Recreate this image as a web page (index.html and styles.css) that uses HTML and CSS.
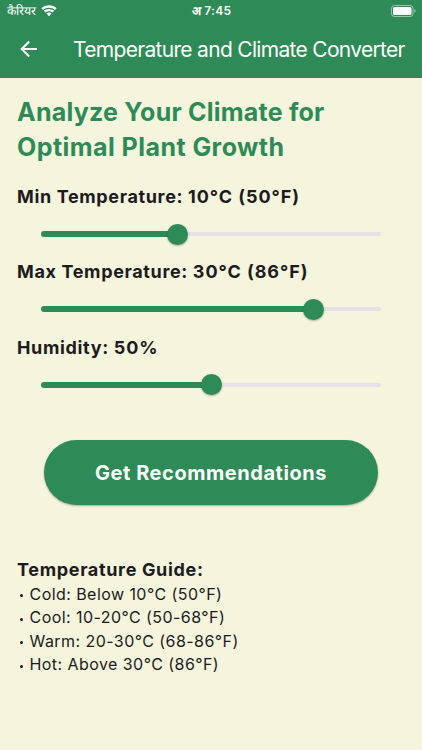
FILE: index.html
```html
<!DOCTYPE html>
<html lang="hi">
<head>
<meta charset="utf-8">
<title>Temperature and Climate Converter</title>
<link rel="stylesheet" href="styles.css">
</head>
<body>
<header class="top">
  <div class="status">
    <div class="carrier"><span>कैरियर</span>
      <svg class="wifi" viewBox="0 0 16 12" width="16" height="12"><path fill="#fff" d="M8 .2C5 .2 2.300 1.300.3 3.200L2.100 5C3.600 3.600 5.700 2.700 8 2.700s4.400.9 5.900 2.300l1.800-1.800C13.700 1.300 11 .2 8 .2Z"/><path fill="#fff" d="M8 3.900C6 3.900 4.200 4.600 2.800 5.800l1.800 1.800C5.500 6.800 6.600 6.300 8 6.300s2.500.5 3.400 1.300l1.800-1.800C11.800 4.600 10 3.900 8 3.900Z"/><path fill="#fff" d="M8 7.500c-1 0-1.900.4-2.600 1L8 11.300l2.600-2.800C9.900 7.900 9 7.500 8 7.500Z"/></svg>
    </div>
    <div class="time">अ 7:45</div>
    <svg class="battery" viewBox="0 0 25 12" width="25" height="12"><rect x=".5" y=".5" width="21.500" height="11" rx="3" fill="none" stroke="#fff" stroke-opacity=".5"/><rect x="2" y="2" width="18.500" height="8" rx="1.500" fill="#fff"/><path d="M23.300 4.200c1 .4 1.400 1 1.400 1.800s-.4 1.400-1.400 1.800Z" fill="#fff" fill-opacity=".5"/></svg>
  </div>
  <div class="appbar">
    <svg class="back" viewBox="0 0 18 18" width="18" height="18"><path d="M17 9H2M9.200 1.500 1.700 9l7.500 7.500" fill="none" stroke="#fff" stroke-width="2"/></svg>
    <div class="title">Temperature and Climate Converter</div>
  </div>
</header>
<main>
  <h1><span class="h1a">Analyze Your Climate for</span><br><span class="h1b">Optimal Plant Growth</span></h1>
  <section class="field">
    <div class="label">Min Temperature: <span class="value">10°C (50°F)</span></div>
    <div class="slider"><div class="fill" style="width:40%"></div><div class="thumb"></div><div class="rest"></div></div>
  </section>
  <section class="field">
    <div class="label">Max Temperature: <span class="value">30°C (86°F)</span></div>
    <div class="slider"><div class="fill" style="width:80%"></div><div class="thumb"></div><div class="rest"></div></div>
  </section>
  <section class="field">
    <div class="label">Humidity: <span class="value">50%</span></div>
    <div class="slider"><div class="fill" style="width:50%"></div><div class="thumb"></div><div class="rest"></div></div>
  </section>
  <button class="cta">Get Recommendations</button>
  <section class="guide">
    <h2>Temperature Guide:</h2>
    <ul>
      <li>Cold: Below 10°C (50°F)</li>
      <li>Cool: 10-20°C (50-68°F)</li>
      <li>Warm: 20-30°C (68-86°F)</li>
      <li>Hot: Above 30°C (86°F)</li>
    </ul>
  </section>
</main>
</body>
</html>
```
FILE: styles.css
```css
* { box-sizing: border-box; }
body { margin: 0; height: 750px; overflow: hidden; background: #f5f4dd; color: #1d1b20; font-family: Inter, "Liberation Sans", sans-serif; white-space: nowrap; }
.top { height: 78px; background: #2e8b57; color: #fff; }
.status { height: 22px; display: grid; grid-template-columns: 1fr auto 1fr; align-items: center; padding: 0 6px 0 7px; }
.carrier { display: flex; align-items: center; gap: 5px; font-size: 12.200px; line-height: 22px; }
.wifi { margin-top: -1px; }
.time { font-size: 12px; font-weight: 600; letter-spacing: .3px; line-height: 22px; }
.battery { justify-self: end; margin-top: -1px; }
.appbar { height: 56px; display: flex; align-items: center; padding-left: 20px; }
.back { margin-top: -2px; flex: none; }
.title { margin: 0 0 0 35px; font-size: 21px; line-height: 28px; letter-spacing: -.69px; }
main { padding: 17px 17px 0; }
h1 { margin: 0 0 19px; color: #2e8b57; font-size: 25px; line-height: 34.500px; font-weight: 650; }
.h1a { letter-spacing: .23px; }
.h1b { letter-spacing: .45px; }
.field { height: 75.400px; }
.label { font-size: 18px; line-height: 28px; font-weight: 650; letter-spacing: .64px; }
.value { letter-spacing: .95px; }
.slider { display: flex; align-items: center; height: 46px; margin: 0 24px; width: 340px; }
.fill { height: 6px; border-radius: 3px 0 0 3px; background: #2e8b57; flex: none; }
.thumb { width: 21px; height: 21px; margin: 0 -10.500px; border-radius: 50%; background: #2e8b57; box-shadow: 0 1px 2px rgba(0,0,0,.3); flex: none; z-index: 1; }
.rest { flex: 1; height: 4px; border-radius: 0 2px 2px 0; background: #e6e0e9; }
.cta { display: block; width: 334px; height: 65px; margin: 31px auto 0; padding: 1px 0 0; border: 0; border-radius: 33px; background: #2e8b57; color: #fff; font: 650 20px/64px Inter, sans-serif; letter-spacing: .55px; box-shadow: 0 1px 2px rgba(0,0,0,.3); }
.guide { margin-top: 51.700px; }
h2 { margin: 0; font-size: 18px; line-height: 26px; font-weight: 700; letter-spacing: .66px; }
ul { list-style: none; margin: 0; padding: 0; }
li { font-size: 16px; line-height: 23.500px; letter-spacing: .44px; display: flex; align-items: center; }
li::before { content: ""; width: 3px; height: 3px; border-radius: 50%; background: #1d1b20; margin: 2px 7px 0 2.500px; }
```
